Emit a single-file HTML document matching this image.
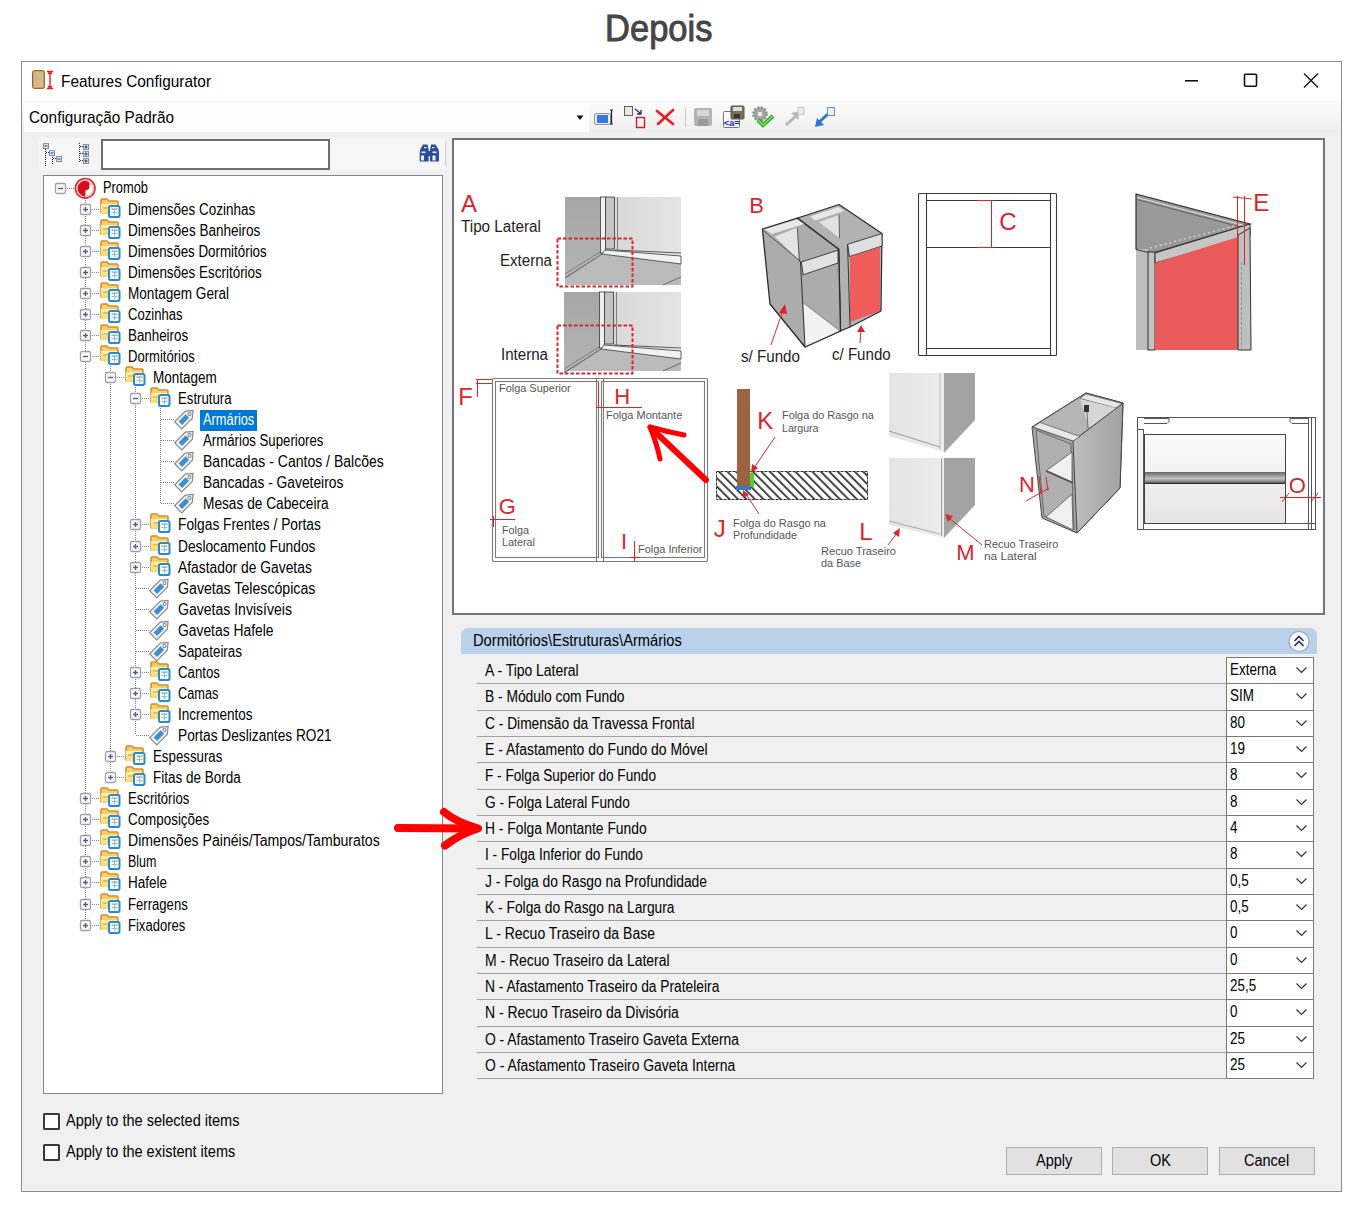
<!DOCTYPE html><html><head><meta charset="utf-8"><style>
html,body{margin:0;padding:0}
body{width:1371px;height:1215px;position:relative;overflow:hidden;background:#fff;font-family:"Liberation Sans",sans-serif}
.t{position:absolute;white-space:pre}
svg{position:absolute;left:0;top:0}
</style></head><body>
<div class="t" style="left:605px;top:11px;font-size:36px;line-height:36px;color:#454545;transform:scaleX(0.9594);transform-origin:0 0;-webkit-text-stroke:0.9px #454545;">Depois</div>
<div style="position:absolute;left:21px;top:61px;width:1319px;height:1129px;border:1px solid #8c8c8c;background:#f0f0f0"></div>
<div style="position:absolute;left:22px;top:62px;width:1319px;height:39px;background:#fff"></div>
<div style="position:absolute;left:22px;top:101px;width:1319px;height:31px;background:linear-gradient(#fcfcfc,#f3f3f3 70%,#ededed)"></div>
<div style="position:absolute;left:22px;top:101px;width:1319px;height:1px;background:#f5f5f5"></div>
<div style="position:absolute;left:24px;top:102px;width:565px;height:30px;background:#fdfdfd"></div>
<div class="t" style="left:61px;top:73px;font-size:17px;line-height:17px;color:#000;transform:scaleX(0.9073);transform-origin:0 0;">Features Configurator</div>
<div class="t" style="left:29px;top:109px;font-size:17px;line-height:17px;color:#000;transform:scaleX(0.9026);transform-origin:0 0;">Configuração Padrão</div>
<svg width="1371" height="1215" style="pointer-events:none"><path d="M1304 73.5 L1318 87.5 M1318 73.5 L1304 87.5" stroke="#111" stroke-width="1.3" fill="none"/><path d="M1185 80.8 h13" stroke="#111" stroke-width="1.6"/><rect x="1244.5" y="74.2" width="12" height="12" rx="1" fill="none" stroke="#111" stroke-width="1.6"/></svg>
<div style="position:absolute;left:39px;top:138px;width:407px;height:32px;background:#f6f6f6;border-radius:4px"></div>
<div style="position:absolute;left:101px;top:139px;width:225px;height:27px;background:#fff;border:2px solid #6d6d6d;box-sizing:content-box"></div>
<div style="position:absolute;left:43px;top:175px;width:398px;height:917px;background:#fff;border:1px solid #828790"></div>
<div class="t" style="left:103px;top:180px;font-size:16px;line-height:16px;color:#000;transform:scaleX(0.8029);transform-origin:0 0;">Promob</div>
<div class="t" style="left:128px;top:202px;font-size:16px;line-height:16px;color:#000;transform:scaleX(0.8408);transform-origin:0 0;">Dimensões Cozinhas</div>
<div class="t" style="left:128px;top:223px;font-size:16px;line-height:16px;color:#000;transform:scaleX(0.8453);transform-origin:0 0;">Dimensões Banheiros</div>
<div class="t" style="left:128px;top:244px;font-size:16px;line-height:16px;color:#000;transform:scaleX(0.8343);transform-origin:0 0;">Dimensões Dormitórios</div>
<div class="t" style="left:128px;top:265px;font-size:16px;line-height:16px;color:#000;transform:scaleX(0.8408);transform-origin:0 0;">Dimensões Escritórios</div>
<div class="t" style="left:128px;top:286px;font-size:16px;line-height:16px;color:#000;transform:scaleX(0.8478);transform-origin:0 0;">Montagem Geral</div>
<div class="t" style="left:128px;top:307px;font-size:16px;line-height:16px;color:#000;transform:scaleX(0.8180);transform-origin:0 0;">Cozinhas</div>
<div class="t" style="left:128px;top:328px;font-size:16px;line-height:16px;color:#000;transform:scaleX(0.8336);transform-origin:0 0;">Banheiros</div>
<div class="t" style="left:128px;top:349px;font-size:16px;line-height:16px;color:#000;transform:scaleX(0.8162);transform-origin:0 0;">Dormitórios</div>
<div class="t" style="left:153px;top:370px;font-size:16px;line-height:16px;color:#000;transform:scaleX(0.8448);transform-origin:0 0;">Montagem</div>
<div class="t" style="left:178px;top:391px;font-size:16px;line-height:16px;color:#000;transform:scaleX(0.8252);transform-origin:0 0;">Estrutura</div>
<div style="position:absolute;left:200px;top:410px;width:57px;height:21px;background:#0078d7"></div>
<div class="t" style="left:203px;top:412px;font-size:16px;line-height:16px;color:#fff;transform:scaleX(0.8012);transform-origin:0 0;">Armários</div>
<div class="t" style="left:203px;top:433px;font-size:16px;line-height:16px;color:#000;transform:scaleX(0.8259);transform-origin:0 0;">Armários Superiores</div>
<div class="t" style="left:203px;top:454px;font-size:16px;line-height:16px;color:#000;transform:scaleX(0.8761);transform-origin:0 0;">Bancadas - Cantos / Balcões</div>
<div class="t" style="left:203px;top:475px;font-size:16px;line-height:16px;color:#000;transform:scaleX(0.8621);transform-origin:0 0;">Bancadas - Gaveteiros</div>
<div class="t" style="left:203px;top:496px;font-size:16px;line-height:16px;color:#000;transform:scaleX(0.8560);transform-origin:0 0;">Mesas de Cabeceira</div>
<div class="t" style="left:178px;top:517px;font-size:16px;line-height:16px;color:#000;transform:scaleX(0.8593);transform-origin:0 0;">Folgas Frentes / Portas</div>
<div class="t" style="left:178px;top:539px;font-size:16px;line-height:16px;color:#000;transform:scaleX(0.8583);transform-origin:0 0;">Deslocamento Fundos</div>
<div class="t" style="left:178px;top:560px;font-size:16px;line-height:16px;color:#000;transform:scaleX(0.8646);transform-origin:0 0;">Afastador de Gavetas</div>
<div class="t" style="left:178px;top:581px;font-size:16px;line-height:16px;color:#000;transform:scaleX(0.8844);transform-origin:0 0;">Gavetas Telescópicas</div>
<div class="t" style="left:178px;top:602px;font-size:16px;line-height:16px;color:#000;transform:scaleX(0.8775);transform-origin:0 0;">Gavetas Invisíveis</div>
<div class="t" style="left:178px;top:623px;font-size:16px;line-height:16px;color:#000;transform:scaleX(0.8661);transform-origin:0 0;">Gavetas Hafele</div>
<div class="t" style="left:178px;top:644px;font-size:16px;line-height:16px;color:#000;transform:scaleX(0.8361);transform-origin:0 0;">Sapateiras</div>
<div class="t" style="left:178px;top:665px;font-size:16px;line-height:16px;color:#000;transform:scaleX(0.8278);transform-origin:0 0;">Cantos</div>
<div class="t" style="left:178px;top:686px;font-size:16px;line-height:16px;color:#000;transform:scaleX(0.7968);transform-origin:0 0;">Camas</div>
<div class="t" style="left:178px;top:707px;font-size:16px;line-height:16px;color:#000;transform:scaleX(0.8480);transform-origin:0 0;">Incrementos</div>
<div class="t" style="left:178px;top:728px;font-size:16px;line-height:16px;color:#000;transform:scaleX(0.8556);transform-origin:0 0;">Portas Deslizantes RO21</div>
<div class="t" style="left:153px;top:749px;font-size:16px;line-height:16px;color:#000;transform:scaleX(0.8299);transform-origin:0 0;">Espessuras</div>
<div class="t" style="left:153px;top:770px;font-size:16px;line-height:16px;color:#000;transform:scaleX(0.8431);transform-origin:0 0;">Fitas de Borda</div>
<div class="t" style="left:128px;top:791px;font-size:16px;line-height:16px;color:#000;transform:scaleX(0.8204);transform-origin:0 0;">Escritórios</div>
<div class="t" style="left:128px;top:812px;font-size:16px;line-height:16px;color:#000;transform:scaleX(0.8372);transform-origin:0 0;">Composições</div>
<div class="t" style="left:128px;top:833px;font-size:16px;line-height:16px;color:#000;transform:scaleX(0.8818);transform-origin:0 0;">Dimensões Painéis/Tampos/Tamburatos</div>
<div class="t" style="left:128px;top:854px;font-size:16px;line-height:16px;color:#000;transform:scaleX(0.7787);transform-origin:0 0;">Blum</div>
<div class="t" style="left:128px;top:875px;font-size:16px;line-height:16px;color:#000;transform:scaleX(0.8424);transform-origin:0 0;">Hafele</div>
<div class="t" style="left:128px;top:897px;font-size:16px;line-height:16px;color:#000;transform:scaleX(0.8195);transform-origin:0 0;">Ferragens</div>
<div class="t" style="left:128px;top:918px;font-size:16px;line-height:16px;color:#000;transform:scaleX(0.8151);transform-origin:0 0;">Fixadores</div>
<svg width="1371" height="1215"><defs><linearGradient id="fg" x1="0" x2="0" y1="0" y2="1"><stop offset="0" stop-color="#fdf0b8"/><stop offset="1" stop-color="#f7d874"/></linearGradient></defs><line x1="85.5" y1="196.0" x2="85.5" y2="925.0" stroke="#808080" stroke-width="1" stroke-dasharray="1 1"/><line x1="110.5" y1="364.0" x2="110.5" y2="777.0" stroke="#808080" stroke-width="1" stroke-dasharray="1 1"/><line x1="135.5" y1="385.0" x2="135.5" y2="735.0" stroke="#808080" stroke-width="1" stroke-dasharray="1 1"/><line x1="160.5" y1="406.0" x2="160.5" y2="503.0" stroke="#808080" stroke-width="1" stroke-dasharray="1 1"/><line x1="61" y1="188.5" x2="75" y2="188.5" stroke="#808080" stroke-width="1" stroke-dasharray="1 1"/><rect x="55.5" y="183.5" width="10" height="10" rx="1.5" fill="#fbfbfb" stroke="#a0a0a0" stroke-width="1.3"/><line x1="58" y1="188.5" x2="63" y2="188.5" stroke="#4a5e99" stroke-width="1.4"/><circle cx="85.2" cy="188.3" r="9.8" fill="#fff" stroke="#dc2a30" stroke-width="1.7"/><circle cx="85.2" cy="188.3" r="7.9" fill="none" stroke="#f2aab0" stroke-width="1"/><path d="M77.8 190.5 Q77 183.5 83 181 Q87 180 89.5 183 Q90 184.5 89.2 186 Q90.3 188 88.7 189.2 Q86.7 190 85.5 190.5 L85.2 196.8 Q80 196 77.8 190.5Z" fill="#d8101c"/><line x1="86" y1="209.5" x2="100" y2="209.5" stroke="#808080" stroke-width="1" stroke-dasharray="1 1"/><rect x="80.5" y="204.5" width="10" height="10" rx="1.5" fill="#fbfbfb" stroke="#a0a0a0" stroke-width="1.3"/><line x1="83" y1="209.5" x2="88" y2="209.5" stroke="#4a5e99" stroke-width="1.4"/><line x1="85.5" y1="207" x2="85.5" y2="212" stroke="#4a5e99" stroke-width="1.4"/><path d="M101 200 q0 -1 1 -1 h5 l2 2 h8 q1 0 1 1 v11 h-17z" fill="#f6cf6a" stroke="#d48f2c" stroke-width="1.5" stroke-linejoin="round"/><path d="M101 204 h16 v10 h-16z" fill="url(#fg)" stroke="none"/><path d="M103 208 h6" stroke="#f0c050" stroke-width="2"/><rect x="109" y="206" width="10.5" height="11" rx="1.8" fill="#fff" stroke="#2a8ad0" stroke-width="2"/><path d="M111.5 209.5 h6 M111.5 212.5 h6 M114.5 208 v7" stroke="#8abce4" stroke-width="1"/><path d="M111.5 208.5 h2 M115.5 208.5 h2" stroke="#f2c040" stroke-width="1.2"/><line x1="86" y1="230.5" x2="100" y2="230.5" stroke="#808080" stroke-width="1" stroke-dasharray="1 1"/><rect x="80.5" y="225.5" width="10" height="10" rx="1.5" fill="#fbfbfb" stroke="#a0a0a0" stroke-width="1.3"/><line x1="83" y1="230.5" x2="88" y2="230.5" stroke="#4a5e99" stroke-width="1.4"/><line x1="85.5" y1="228" x2="85.5" y2="233" stroke="#4a5e99" stroke-width="1.4"/><path d="M101 221 q0 -1 1 -1 h5 l2 2 h8 q1 0 1 1 v11 h-17z" fill="#f6cf6a" stroke="#d48f2c" stroke-width="1.5" stroke-linejoin="round"/><path d="M101 225 h16 v10 h-16z" fill="url(#fg)" stroke="none"/><path d="M103 229 h6" stroke="#f0c050" stroke-width="2"/><rect x="109" y="227" width="10.5" height="11" rx="1.8" fill="#fff" stroke="#2a8ad0" stroke-width="2"/><path d="M111.5 230.5 h6 M111.5 233.5 h6 M114.5 229 v7" stroke="#8abce4" stroke-width="1"/><path d="M111.5 229.5 h2 M115.5 229.5 h2" stroke="#f2c040" stroke-width="1.2"/><line x1="86" y1="251.5" x2="100" y2="251.5" stroke="#808080" stroke-width="1" stroke-dasharray="1 1"/><rect x="80.5" y="246.5" width="10" height="10" rx="1.5" fill="#fbfbfb" stroke="#a0a0a0" stroke-width="1.3"/><line x1="83" y1="251.5" x2="88" y2="251.5" stroke="#4a5e99" stroke-width="1.4"/><line x1="85.5" y1="249" x2="85.5" y2="254" stroke="#4a5e99" stroke-width="1.4"/><path d="M101 242 q0 -1 1 -1 h5 l2 2 h8 q1 0 1 1 v11 h-17z" fill="#f6cf6a" stroke="#d48f2c" stroke-width="1.5" stroke-linejoin="round"/><path d="M101 246 h16 v10 h-16z" fill="url(#fg)" stroke="none"/><path d="M103 250 h6" stroke="#f0c050" stroke-width="2"/><rect x="109" y="248" width="10.5" height="11" rx="1.8" fill="#fff" stroke="#2a8ad0" stroke-width="2"/><path d="M111.5 251.5 h6 M111.5 254.5 h6 M114.5 250 v7" stroke="#8abce4" stroke-width="1"/><path d="M111.5 250.5 h2 M115.5 250.5 h2" stroke="#f2c040" stroke-width="1.2"/><line x1="86" y1="272.5" x2="100" y2="272.5" stroke="#808080" stroke-width="1" stroke-dasharray="1 1"/><rect x="80.5" y="267.5" width="10" height="10" rx="1.5" fill="#fbfbfb" stroke="#a0a0a0" stroke-width="1.3"/><line x1="83" y1="272.5" x2="88" y2="272.5" stroke="#4a5e99" stroke-width="1.4"/><line x1="85.5" y1="270" x2="85.5" y2="275" stroke="#4a5e99" stroke-width="1.4"/><path d="M101 263 q0 -1 1 -1 h5 l2 2 h8 q1 0 1 1 v11 h-17z" fill="#f6cf6a" stroke="#d48f2c" stroke-width="1.5" stroke-linejoin="round"/><path d="M101 267 h16 v10 h-16z" fill="url(#fg)" stroke="none"/><path d="M103 271 h6" stroke="#f0c050" stroke-width="2"/><rect x="109" y="269" width="10.5" height="11" rx="1.8" fill="#fff" stroke="#2a8ad0" stroke-width="2"/><path d="M111.5 272.5 h6 M111.5 275.5 h6 M114.5 271 v7" stroke="#8abce4" stroke-width="1"/><path d="M111.5 271.5 h2 M115.5 271.5 h2" stroke="#f2c040" stroke-width="1.2"/><line x1="86" y1="293.5" x2="100" y2="293.5" stroke="#808080" stroke-width="1" stroke-dasharray="1 1"/><rect x="80.5" y="288.5" width="10" height="10" rx="1.5" fill="#fbfbfb" stroke="#a0a0a0" stroke-width="1.3"/><line x1="83" y1="293.5" x2="88" y2="293.5" stroke="#4a5e99" stroke-width="1.4"/><line x1="85.5" y1="291" x2="85.5" y2="296" stroke="#4a5e99" stroke-width="1.4"/><path d="M101 284 q0 -1 1 -1 h5 l2 2 h8 q1 0 1 1 v11 h-17z" fill="#f6cf6a" stroke="#d48f2c" stroke-width="1.5" stroke-linejoin="round"/><path d="M101 288 h16 v10 h-16z" fill="url(#fg)" stroke="none"/><path d="M103 292 h6" stroke="#f0c050" stroke-width="2"/><rect x="109" y="290" width="10.5" height="11" rx="1.8" fill="#fff" stroke="#2a8ad0" stroke-width="2"/><path d="M111.5 293.5 h6 M111.5 296.5 h6 M114.5 292 v7" stroke="#8abce4" stroke-width="1"/><path d="M111.5 292.5 h2 M115.5 292.5 h2" stroke="#f2c040" stroke-width="1.2"/><line x1="86" y1="314.5" x2="100" y2="314.5" stroke="#808080" stroke-width="1" stroke-dasharray="1 1"/><rect x="80.5" y="309.5" width="10" height="10" rx="1.5" fill="#fbfbfb" stroke="#a0a0a0" stroke-width="1.3"/><line x1="83" y1="314.5" x2="88" y2="314.5" stroke="#4a5e99" stroke-width="1.4"/><line x1="85.5" y1="312" x2="85.5" y2="317" stroke="#4a5e99" stroke-width="1.4"/><path d="M101 305 q0 -1 1 -1 h5 l2 2 h8 q1 0 1 1 v11 h-17z" fill="#f6cf6a" stroke="#d48f2c" stroke-width="1.5" stroke-linejoin="round"/><path d="M101 309 h16 v10 h-16z" fill="url(#fg)" stroke="none"/><path d="M103 313 h6" stroke="#f0c050" stroke-width="2"/><rect x="109" y="311" width="10.5" height="11" rx="1.8" fill="#fff" stroke="#2a8ad0" stroke-width="2"/><path d="M111.5 314.5 h6 M111.5 317.5 h6 M114.5 313 v7" stroke="#8abce4" stroke-width="1"/><path d="M111.5 313.5 h2 M115.5 313.5 h2" stroke="#f2c040" stroke-width="1.2"/><line x1="86" y1="335.5" x2="100" y2="335.5" stroke="#808080" stroke-width="1" stroke-dasharray="1 1"/><rect x="80.5" y="330.5" width="10" height="10" rx="1.5" fill="#fbfbfb" stroke="#a0a0a0" stroke-width="1.3"/><line x1="83" y1="335.5" x2="88" y2="335.5" stroke="#4a5e99" stroke-width="1.4"/><line x1="85.5" y1="333" x2="85.5" y2="338" stroke="#4a5e99" stroke-width="1.4"/><path d="M101 326 q0 -1 1 -1 h5 l2 2 h8 q1 0 1 1 v11 h-17z" fill="#f6cf6a" stroke="#d48f2c" stroke-width="1.5" stroke-linejoin="round"/><path d="M101 330 h16 v10 h-16z" fill="url(#fg)" stroke="none"/><path d="M103 334 h6" stroke="#f0c050" stroke-width="2"/><rect x="109" y="332" width="10.5" height="11" rx="1.8" fill="#fff" stroke="#2a8ad0" stroke-width="2"/><path d="M111.5 335.5 h6 M111.5 338.5 h6 M114.5 334 v7" stroke="#8abce4" stroke-width="1"/><path d="M111.5 334.5 h2 M115.5 334.5 h2" stroke="#f2c040" stroke-width="1.2"/><line x1="86" y1="356.5" x2="100" y2="356.5" stroke="#808080" stroke-width="1" stroke-dasharray="1 1"/><rect x="80.5" y="351.5" width="10" height="10" rx="1.5" fill="#fbfbfb" stroke="#a0a0a0" stroke-width="1.3"/><line x1="83" y1="356.5" x2="88" y2="356.5" stroke="#4a5e99" stroke-width="1.4"/><path d="M101 347 q0 -1 1 -1 h5 l2 2 h8 q1 0 1 1 v11 h-17z" fill="#f6cf6a" stroke="#d48f2c" stroke-width="1.5" stroke-linejoin="round"/><path d="M101 351 h16 v10 h-16z" fill="url(#fg)" stroke="none"/><path d="M103 355 h6" stroke="#f0c050" stroke-width="2"/><rect x="109" y="353" width="10.5" height="11" rx="1.8" fill="#fff" stroke="#2a8ad0" stroke-width="2"/><path d="M111.5 356.5 h6 M111.5 359.5 h6 M114.5 355 v7" stroke="#8abce4" stroke-width="1"/><path d="M111.5 355.5 h2 M115.5 355.5 h2" stroke="#f2c040" stroke-width="1.2"/><line x1="111" y1="377.5" x2="125" y2="377.5" stroke="#808080" stroke-width="1" stroke-dasharray="1 1"/><rect x="105.5" y="372.5" width="10" height="10" rx="1.5" fill="#fbfbfb" stroke="#a0a0a0" stroke-width="1.3"/><line x1="108" y1="377.5" x2="113" y2="377.5" stroke="#4a5e99" stroke-width="1.4"/><path d="M126 368 q0 -1 1 -1 h5 l2 2 h8 q1 0 1 1 v11 h-17z" fill="#f6cf6a" stroke="#d48f2c" stroke-width="1.5" stroke-linejoin="round"/><path d="M126 372 h16 v10 h-16z" fill="url(#fg)" stroke="none"/><path d="M128 376 h6" stroke="#f0c050" stroke-width="2"/><rect x="134" y="374" width="10.5" height="11" rx="1.8" fill="#fff" stroke="#2a8ad0" stroke-width="2"/><path d="M136.5 377.5 h6 M136.5 380.5 h6 M139.5 376 v7" stroke="#8abce4" stroke-width="1"/><path d="M136.5 376.5 h2 M140.5 376.5 h2" stroke="#f2c040" stroke-width="1.2"/><line x1="136" y1="398.5" x2="150" y2="398.5" stroke="#808080" stroke-width="1" stroke-dasharray="1 1"/><rect x="130.5" y="393.5" width="10" height="10" rx="1.5" fill="#fbfbfb" stroke="#a0a0a0" stroke-width="1.3"/><line x1="133" y1="398.5" x2="138" y2="398.5" stroke="#4a5e99" stroke-width="1.4"/><path d="M151 389 q0 -1 1 -1 h5 l2 2 h8 q1 0 1 1 v11 h-17z" fill="#f6cf6a" stroke="#d48f2c" stroke-width="1.5" stroke-linejoin="round"/><path d="M151 393 h16 v10 h-16z" fill="url(#fg)" stroke="none"/><path d="M153 397 h6" stroke="#f0c050" stroke-width="2"/><rect x="159" y="395" width="10.5" height="11" rx="1.8" fill="#fff" stroke="#2a8ad0" stroke-width="2"/><path d="M161.5 398.5 h6 M161.5 401.5 h6 M164.5 397 v7" stroke="#8abce4" stroke-width="1"/><path d="M161.5 397.5 h2 M165.5 397.5 h2" stroke="#f2c040" stroke-width="1.2"/><line x1="161" y1="419.5" x2="175" y2="419.5" stroke="#808080" stroke-width="1" stroke-dasharray="1 1"/><g transform="translate(186,417.5) rotate(-45)"><path d="M-11 -5 h15 l6 5 l-6 5 h-15z" fill="#f4f4f4" stroke="#8a8a8a" stroke-width="1.2"/><rect x="-8" y="-2.5" width="10" height="5" fill="#3c8fd3"/><circle cx="5" cy="0" r="1.5" fill="none" stroke="#8a8a8a"/></g><line x1="161" y1="440.5" x2="175" y2="440.5" stroke="#808080" stroke-width="1" stroke-dasharray="1 1"/><g transform="translate(186,438.5) rotate(-45)"><path d="M-11 -5 h15 l6 5 l-6 5 h-15z" fill="#f4f4f4" stroke="#8a8a8a" stroke-width="1.2"/><rect x="-8" y="-2.5" width="10" height="5" fill="#3c8fd3"/><circle cx="5" cy="0" r="1.5" fill="none" stroke="#8a8a8a"/></g><line x1="161" y1="461.5" x2="175" y2="461.5" stroke="#808080" stroke-width="1" stroke-dasharray="1 1"/><g transform="translate(186,459.5) rotate(-45)"><path d="M-11 -5 h15 l6 5 l-6 5 h-15z" fill="#f4f4f4" stroke="#8a8a8a" stroke-width="1.2"/><rect x="-8" y="-2.5" width="10" height="5" fill="#3c8fd3"/><circle cx="5" cy="0" r="1.5" fill="none" stroke="#8a8a8a"/></g><line x1="161" y1="482.5" x2="175" y2="482.5" stroke="#808080" stroke-width="1" stroke-dasharray="1 1"/><g transform="translate(186,480.5) rotate(-45)"><path d="M-11 -5 h15 l6 5 l-6 5 h-15z" fill="#f4f4f4" stroke="#8a8a8a" stroke-width="1.2"/><rect x="-8" y="-2.5" width="10" height="5" fill="#3c8fd3"/><circle cx="5" cy="0" r="1.5" fill="none" stroke="#8a8a8a"/></g><line x1="161" y1="503.5" x2="175" y2="503.5" stroke="#808080" stroke-width="1" stroke-dasharray="1 1"/><g transform="translate(186,501.5) rotate(-45)"><path d="M-11 -5 h15 l6 5 l-6 5 h-15z" fill="#f4f4f4" stroke="#8a8a8a" stroke-width="1.2"/><rect x="-8" y="-2.5" width="10" height="5" fill="#3c8fd3"/><circle cx="5" cy="0" r="1.5" fill="none" stroke="#8a8a8a"/></g><line x1="136" y1="524.5" x2="150" y2="524.5" stroke="#808080" stroke-width="1" stroke-dasharray="1 1"/><rect x="130.5" y="519.5" width="10" height="10" rx="1.5" fill="#fbfbfb" stroke="#a0a0a0" stroke-width="1.3"/><line x1="133" y1="524.5" x2="138" y2="524.5" stroke="#4a5e99" stroke-width="1.4"/><line x1="135.5" y1="522" x2="135.5" y2="527" stroke="#4a5e99" stroke-width="1.4"/><path d="M151 515 q0 -1 1 -1 h5 l2 2 h8 q1 0 1 1 v11 h-17z" fill="#f6cf6a" stroke="#d48f2c" stroke-width="1.5" stroke-linejoin="round"/><path d="M151 519 h16 v10 h-16z" fill="url(#fg)" stroke="none"/><path d="M153 523 h6" stroke="#f0c050" stroke-width="2"/><rect x="159" y="521" width="10.5" height="11" rx="1.8" fill="#fff" stroke="#2a8ad0" stroke-width="2"/><path d="M161.5 524.5 h6 M161.5 527.5 h6 M164.5 523 v7" stroke="#8abce4" stroke-width="1"/><path d="M161.5 523.5 h2 M165.5 523.5 h2" stroke="#f2c040" stroke-width="1.2"/><line x1="136" y1="546.5" x2="150" y2="546.5" stroke="#808080" stroke-width="1" stroke-dasharray="1 1"/><rect x="130.5" y="541.5" width="10" height="10" rx="1.5" fill="#fbfbfb" stroke="#a0a0a0" stroke-width="1.3"/><line x1="133" y1="546.5" x2="138" y2="546.5" stroke="#4a5e99" stroke-width="1.4"/><line x1="135.5" y1="544" x2="135.5" y2="549" stroke="#4a5e99" stroke-width="1.4"/><path d="M151 537 q0 -1 1 -1 h5 l2 2 h8 q1 0 1 1 v11 h-17z" fill="#f6cf6a" stroke="#d48f2c" stroke-width="1.5" stroke-linejoin="round"/><path d="M151 541 h16 v10 h-16z" fill="url(#fg)" stroke="none"/><path d="M153 545 h6" stroke="#f0c050" stroke-width="2"/><rect x="159" y="543" width="10.5" height="11" rx="1.8" fill="#fff" stroke="#2a8ad0" stroke-width="2"/><path d="M161.5 546.5 h6 M161.5 549.5 h6 M164.5 545 v7" stroke="#8abce4" stroke-width="1"/><path d="M161.5 545.5 h2 M165.5 545.5 h2" stroke="#f2c040" stroke-width="1.2"/><line x1="136" y1="567.5" x2="150" y2="567.5" stroke="#808080" stroke-width="1" stroke-dasharray="1 1"/><rect x="130.5" y="562.5" width="10" height="10" rx="1.5" fill="#fbfbfb" stroke="#a0a0a0" stroke-width="1.3"/><line x1="133" y1="567.5" x2="138" y2="567.5" stroke="#4a5e99" stroke-width="1.4"/><line x1="135.5" y1="565" x2="135.5" y2="570" stroke="#4a5e99" stroke-width="1.4"/><path d="M151 558 q0 -1 1 -1 h5 l2 2 h8 q1 0 1 1 v11 h-17z" fill="#f6cf6a" stroke="#d48f2c" stroke-width="1.5" stroke-linejoin="round"/><path d="M151 562 h16 v10 h-16z" fill="url(#fg)" stroke="none"/><path d="M153 566 h6" stroke="#f0c050" stroke-width="2"/><rect x="159" y="564" width="10.5" height="11" rx="1.8" fill="#fff" stroke="#2a8ad0" stroke-width="2"/><path d="M161.5 567.5 h6 M161.5 570.5 h6 M164.5 566 v7" stroke="#8abce4" stroke-width="1"/><path d="M161.5 566.5 h2 M165.5 566.5 h2" stroke="#f2c040" stroke-width="1.2"/><line x1="136" y1="588.5" x2="150" y2="588.5" stroke="#808080" stroke-width="1" stroke-dasharray="1 1"/><g transform="translate(161,586.5) rotate(-45)"><path d="M-11 -5 h15 l6 5 l-6 5 h-15z" fill="#f4f4f4" stroke="#8a8a8a" stroke-width="1.2"/><rect x="-8" y="-2.5" width="10" height="5" fill="#3c8fd3"/><circle cx="5" cy="0" r="1.5" fill="none" stroke="#8a8a8a"/></g><line x1="136" y1="609.5" x2="150" y2="609.5" stroke="#808080" stroke-width="1" stroke-dasharray="1 1"/><g transform="translate(161,607.5) rotate(-45)"><path d="M-11 -5 h15 l6 5 l-6 5 h-15z" fill="#f4f4f4" stroke="#8a8a8a" stroke-width="1.2"/><rect x="-8" y="-2.5" width="10" height="5" fill="#3c8fd3"/><circle cx="5" cy="0" r="1.5" fill="none" stroke="#8a8a8a"/></g><line x1="136" y1="630.5" x2="150" y2="630.5" stroke="#808080" stroke-width="1" stroke-dasharray="1 1"/><g transform="translate(161,628.5) rotate(-45)"><path d="M-11 -5 h15 l6 5 l-6 5 h-15z" fill="#f4f4f4" stroke="#8a8a8a" stroke-width="1.2"/><rect x="-8" y="-2.5" width="10" height="5" fill="#3c8fd3"/><circle cx="5" cy="0" r="1.5" fill="none" stroke="#8a8a8a"/></g><line x1="136" y1="651.5" x2="150" y2="651.5" stroke="#808080" stroke-width="1" stroke-dasharray="1 1"/><g transform="translate(161,649.5) rotate(-45)"><path d="M-11 -5 h15 l6 5 l-6 5 h-15z" fill="#f4f4f4" stroke="#8a8a8a" stroke-width="1.2"/><rect x="-8" y="-2.5" width="10" height="5" fill="#3c8fd3"/><circle cx="5" cy="0" r="1.5" fill="none" stroke="#8a8a8a"/></g><line x1="136" y1="672.5" x2="150" y2="672.5" stroke="#808080" stroke-width="1" stroke-dasharray="1 1"/><rect x="130.5" y="667.5" width="10" height="10" rx="1.5" fill="#fbfbfb" stroke="#a0a0a0" stroke-width="1.3"/><line x1="133" y1="672.5" x2="138" y2="672.5" stroke="#4a5e99" stroke-width="1.4"/><line x1="135.5" y1="670" x2="135.5" y2="675" stroke="#4a5e99" stroke-width="1.4"/><path d="M151 663 q0 -1 1 -1 h5 l2 2 h8 q1 0 1 1 v11 h-17z" fill="#f6cf6a" stroke="#d48f2c" stroke-width="1.5" stroke-linejoin="round"/><path d="M151 667 h16 v10 h-16z" fill="url(#fg)" stroke="none"/><path d="M153 671 h6" stroke="#f0c050" stroke-width="2"/><rect x="159" y="669" width="10.5" height="11" rx="1.8" fill="#fff" stroke="#2a8ad0" stroke-width="2"/><path d="M161.5 672.5 h6 M161.5 675.5 h6 M164.5 671 v7" stroke="#8abce4" stroke-width="1"/><path d="M161.5 671.5 h2 M165.5 671.5 h2" stroke="#f2c040" stroke-width="1.2"/><line x1="136" y1="693.5" x2="150" y2="693.5" stroke="#808080" stroke-width="1" stroke-dasharray="1 1"/><rect x="130.5" y="688.5" width="10" height="10" rx="1.5" fill="#fbfbfb" stroke="#a0a0a0" stroke-width="1.3"/><line x1="133" y1="693.5" x2="138" y2="693.5" stroke="#4a5e99" stroke-width="1.4"/><line x1="135.5" y1="691" x2="135.5" y2="696" stroke="#4a5e99" stroke-width="1.4"/><path d="M151 684 q0 -1 1 -1 h5 l2 2 h8 q1 0 1 1 v11 h-17z" fill="#f6cf6a" stroke="#d48f2c" stroke-width="1.5" stroke-linejoin="round"/><path d="M151 688 h16 v10 h-16z" fill="url(#fg)" stroke="none"/><path d="M153 692 h6" stroke="#f0c050" stroke-width="2"/><rect x="159" y="690" width="10.5" height="11" rx="1.8" fill="#fff" stroke="#2a8ad0" stroke-width="2"/><path d="M161.5 693.5 h6 M161.5 696.5 h6 M164.5 692 v7" stroke="#8abce4" stroke-width="1"/><path d="M161.5 692.5 h2 M165.5 692.5 h2" stroke="#f2c040" stroke-width="1.2"/><line x1="136" y1="714.5" x2="150" y2="714.5" stroke="#808080" stroke-width="1" stroke-dasharray="1 1"/><rect x="130.5" y="709.5" width="10" height="10" rx="1.5" fill="#fbfbfb" stroke="#a0a0a0" stroke-width="1.3"/><line x1="133" y1="714.5" x2="138" y2="714.5" stroke="#4a5e99" stroke-width="1.4"/><line x1="135.5" y1="712" x2="135.5" y2="717" stroke="#4a5e99" stroke-width="1.4"/><path d="M151 705 q0 -1 1 -1 h5 l2 2 h8 q1 0 1 1 v11 h-17z" fill="#f6cf6a" stroke="#d48f2c" stroke-width="1.5" stroke-linejoin="round"/><path d="M151 709 h16 v10 h-16z" fill="url(#fg)" stroke="none"/><path d="M153 713 h6" stroke="#f0c050" stroke-width="2"/><rect x="159" y="711" width="10.5" height="11" rx="1.8" fill="#fff" stroke="#2a8ad0" stroke-width="2"/><path d="M161.5 714.5 h6 M161.5 717.5 h6 M164.5 713 v7" stroke="#8abce4" stroke-width="1"/><path d="M161.5 713.5 h2 M165.5 713.5 h2" stroke="#f2c040" stroke-width="1.2"/><line x1="136" y1="735.5" x2="150" y2="735.5" stroke="#808080" stroke-width="1" stroke-dasharray="1 1"/><g transform="translate(161,733.5) rotate(-45)"><path d="M-11 -5 h15 l6 5 l-6 5 h-15z" fill="#f4f4f4" stroke="#8a8a8a" stroke-width="1.2"/><rect x="-8" y="-2.5" width="10" height="5" fill="#3c8fd3"/><circle cx="5" cy="0" r="1.5" fill="none" stroke="#8a8a8a"/></g><line x1="111" y1="756.5" x2="125" y2="756.5" stroke="#808080" stroke-width="1" stroke-dasharray="1 1"/><rect x="105.5" y="751.5" width="10" height="10" rx="1.5" fill="#fbfbfb" stroke="#a0a0a0" stroke-width="1.3"/><line x1="108" y1="756.5" x2="113" y2="756.5" stroke="#4a5e99" stroke-width="1.4"/><line x1="110.5" y1="754" x2="110.5" y2="759" stroke="#4a5e99" stroke-width="1.4"/><path d="M126 747 q0 -1 1 -1 h5 l2 2 h8 q1 0 1 1 v11 h-17z" fill="#f6cf6a" stroke="#d48f2c" stroke-width="1.5" stroke-linejoin="round"/><path d="M126 751 h16 v10 h-16z" fill="url(#fg)" stroke="none"/><path d="M128 755 h6" stroke="#f0c050" stroke-width="2"/><rect x="134" y="753" width="10.5" height="11" rx="1.8" fill="#fff" stroke="#2a8ad0" stroke-width="2"/><path d="M136.5 756.5 h6 M136.5 759.5 h6 M139.5 755 v7" stroke="#8abce4" stroke-width="1"/><path d="M136.5 755.5 h2 M140.5 755.5 h2" stroke="#f2c040" stroke-width="1.2"/><line x1="111" y1="777.5" x2="125" y2="777.5" stroke="#808080" stroke-width="1" stroke-dasharray="1 1"/><rect x="105.5" y="772.5" width="10" height="10" rx="1.5" fill="#fbfbfb" stroke="#a0a0a0" stroke-width="1.3"/><line x1="108" y1="777.5" x2="113" y2="777.5" stroke="#4a5e99" stroke-width="1.4"/><line x1="110.5" y1="775" x2="110.5" y2="780" stroke="#4a5e99" stroke-width="1.4"/><path d="M126 768 q0 -1 1 -1 h5 l2 2 h8 q1 0 1 1 v11 h-17z" fill="#f6cf6a" stroke="#d48f2c" stroke-width="1.5" stroke-linejoin="round"/><path d="M126 772 h16 v10 h-16z" fill="url(#fg)" stroke="none"/><path d="M128 776 h6" stroke="#f0c050" stroke-width="2"/><rect x="134" y="774" width="10.5" height="11" rx="1.8" fill="#fff" stroke="#2a8ad0" stroke-width="2"/><path d="M136.5 777.5 h6 M136.5 780.5 h6 M139.5 776 v7" stroke="#8abce4" stroke-width="1"/><path d="M136.5 776.5 h2 M140.5 776.5 h2" stroke="#f2c040" stroke-width="1.2"/><line x1="86" y1="798.5" x2="100" y2="798.5" stroke="#808080" stroke-width="1" stroke-dasharray="1 1"/><rect x="80.5" y="793.5" width="10" height="10" rx="1.5" fill="#fbfbfb" stroke="#a0a0a0" stroke-width="1.3"/><line x1="83" y1="798.5" x2="88" y2="798.5" stroke="#4a5e99" stroke-width="1.4"/><line x1="85.5" y1="796" x2="85.5" y2="801" stroke="#4a5e99" stroke-width="1.4"/><path d="M101 789 q0 -1 1 -1 h5 l2 2 h8 q1 0 1 1 v11 h-17z" fill="#f6cf6a" stroke="#d48f2c" stroke-width="1.5" stroke-linejoin="round"/><path d="M101 793 h16 v10 h-16z" fill="url(#fg)" stroke="none"/><path d="M103 797 h6" stroke="#f0c050" stroke-width="2"/><rect x="109" y="795" width="10.5" height="11" rx="1.8" fill="#fff" stroke="#2a8ad0" stroke-width="2"/><path d="M111.5 798.5 h6 M111.5 801.5 h6 M114.5 797 v7" stroke="#8abce4" stroke-width="1"/><path d="M111.5 797.5 h2 M115.5 797.5 h2" stroke="#f2c040" stroke-width="1.2"/><line x1="86" y1="819.5" x2="100" y2="819.5" stroke="#808080" stroke-width="1" stroke-dasharray="1 1"/><rect x="80.5" y="814.5" width="10" height="10" rx="1.5" fill="#fbfbfb" stroke="#a0a0a0" stroke-width="1.3"/><line x1="83" y1="819.5" x2="88" y2="819.5" stroke="#4a5e99" stroke-width="1.4"/><line x1="85.5" y1="817" x2="85.5" y2="822" stroke="#4a5e99" stroke-width="1.4"/><path d="M101 810 q0 -1 1 -1 h5 l2 2 h8 q1 0 1 1 v11 h-17z" fill="#f6cf6a" stroke="#d48f2c" stroke-width="1.5" stroke-linejoin="round"/><path d="M101 814 h16 v10 h-16z" fill="url(#fg)" stroke="none"/><path d="M103 818 h6" stroke="#f0c050" stroke-width="2"/><rect x="109" y="816" width="10.5" height="11" rx="1.8" fill="#fff" stroke="#2a8ad0" stroke-width="2"/><path d="M111.5 819.5 h6 M111.5 822.5 h6 M114.5 818 v7" stroke="#8abce4" stroke-width="1"/><path d="M111.5 818.5 h2 M115.5 818.5 h2" stroke="#f2c040" stroke-width="1.2"/><line x1="86" y1="840.5" x2="100" y2="840.5" stroke="#808080" stroke-width="1" stroke-dasharray="1 1"/><rect x="80.5" y="835.5" width="10" height="10" rx="1.5" fill="#fbfbfb" stroke="#a0a0a0" stroke-width="1.3"/><line x1="83" y1="840.5" x2="88" y2="840.5" stroke="#4a5e99" stroke-width="1.4"/><line x1="85.5" y1="838" x2="85.5" y2="843" stroke="#4a5e99" stroke-width="1.4"/><path d="M101 831 q0 -1 1 -1 h5 l2 2 h8 q1 0 1 1 v11 h-17z" fill="#f6cf6a" stroke="#d48f2c" stroke-width="1.5" stroke-linejoin="round"/><path d="M101 835 h16 v10 h-16z" fill="url(#fg)" stroke="none"/><path d="M103 839 h6" stroke="#f0c050" stroke-width="2"/><rect x="109" y="837" width="10.5" height="11" rx="1.8" fill="#fff" stroke="#2a8ad0" stroke-width="2"/><path d="M111.5 840.5 h6 M111.5 843.5 h6 M114.5 839 v7" stroke="#8abce4" stroke-width="1"/><path d="M111.5 839.5 h2 M115.5 839.5 h2" stroke="#f2c040" stroke-width="1.2"/><line x1="86" y1="861.5" x2="100" y2="861.5" stroke="#808080" stroke-width="1" stroke-dasharray="1 1"/><rect x="80.5" y="856.5" width="10" height="10" rx="1.5" fill="#fbfbfb" stroke="#a0a0a0" stroke-width="1.3"/><line x1="83" y1="861.5" x2="88" y2="861.5" stroke="#4a5e99" stroke-width="1.4"/><line x1="85.5" y1="859" x2="85.5" y2="864" stroke="#4a5e99" stroke-width="1.4"/><path d="M101 852 q0 -1 1 -1 h5 l2 2 h8 q1 0 1 1 v11 h-17z" fill="#f6cf6a" stroke="#d48f2c" stroke-width="1.5" stroke-linejoin="round"/><path d="M101 856 h16 v10 h-16z" fill="url(#fg)" stroke="none"/><path d="M103 860 h6" stroke="#f0c050" stroke-width="2"/><rect x="109" y="858" width="10.5" height="11" rx="1.8" fill="#fff" stroke="#2a8ad0" stroke-width="2"/><path d="M111.5 861.5 h6 M111.5 864.5 h6 M114.5 860 v7" stroke="#8abce4" stroke-width="1"/><path d="M111.5 860.5 h2 M115.5 860.5 h2" stroke="#f2c040" stroke-width="1.2"/><line x1="86" y1="882.5" x2="100" y2="882.5" stroke="#808080" stroke-width="1" stroke-dasharray="1 1"/><rect x="80.5" y="877.5" width="10" height="10" rx="1.5" fill="#fbfbfb" stroke="#a0a0a0" stroke-width="1.3"/><line x1="83" y1="882.5" x2="88" y2="882.5" stroke="#4a5e99" stroke-width="1.4"/><line x1="85.5" y1="880" x2="85.5" y2="885" stroke="#4a5e99" stroke-width="1.4"/><path d="M101 873 q0 -1 1 -1 h5 l2 2 h8 q1 0 1 1 v11 h-17z" fill="#f6cf6a" stroke="#d48f2c" stroke-width="1.5" stroke-linejoin="round"/><path d="M101 877 h16 v10 h-16z" fill="url(#fg)" stroke="none"/><path d="M103 881 h6" stroke="#f0c050" stroke-width="2"/><rect x="109" y="879" width="10.5" height="11" rx="1.8" fill="#fff" stroke="#2a8ad0" stroke-width="2"/><path d="M111.5 882.5 h6 M111.5 885.5 h6 M114.5 881 v7" stroke="#8abce4" stroke-width="1"/><path d="M111.5 881.5 h2 M115.5 881.5 h2" stroke="#f2c040" stroke-width="1.2"/><line x1="86" y1="904.5" x2="100" y2="904.5" stroke="#808080" stroke-width="1" stroke-dasharray="1 1"/><rect x="80.5" y="899.5" width="10" height="10" rx="1.5" fill="#fbfbfb" stroke="#a0a0a0" stroke-width="1.3"/><line x1="83" y1="904.5" x2="88" y2="904.5" stroke="#4a5e99" stroke-width="1.4"/><line x1="85.5" y1="902" x2="85.5" y2="907" stroke="#4a5e99" stroke-width="1.4"/><path d="M101 895 q0 -1 1 -1 h5 l2 2 h8 q1 0 1 1 v11 h-17z" fill="#f6cf6a" stroke="#d48f2c" stroke-width="1.5" stroke-linejoin="round"/><path d="M101 899 h16 v10 h-16z" fill="url(#fg)" stroke="none"/><path d="M103 903 h6" stroke="#f0c050" stroke-width="2"/><rect x="109" y="901" width="10.5" height="11" rx="1.8" fill="#fff" stroke="#2a8ad0" stroke-width="2"/><path d="M111.5 904.5 h6 M111.5 907.5 h6 M114.5 903 v7" stroke="#8abce4" stroke-width="1"/><path d="M111.5 903.5 h2 M115.5 903.5 h2" stroke="#f2c040" stroke-width="1.2"/><line x1="86" y1="925.5" x2="100" y2="925.5" stroke="#808080" stroke-width="1" stroke-dasharray="1 1"/><rect x="80.5" y="920.5" width="10" height="10" rx="1.5" fill="#fbfbfb" stroke="#a0a0a0" stroke-width="1.3"/><line x1="83" y1="925.5" x2="88" y2="925.5" stroke="#4a5e99" stroke-width="1.4"/><line x1="85.5" y1="923" x2="85.5" y2="928" stroke="#4a5e99" stroke-width="1.4"/><path d="M101 916 q0 -1 1 -1 h5 l2 2 h8 q1 0 1 1 v11 h-17z" fill="#f6cf6a" stroke="#d48f2c" stroke-width="1.5" stroke-linejoin="round"/><path d="M101 920 h16 v10 h-16z" fill="url(#fg)" stroke="none"/><path d="M103 924 h6" stroke="#f0c050" stroke-width="2"/><rect x="109" y="922" width="10.5" height="11" rx="1.8" fill="#fff" stroke="#2a8ad0" stroke-width="2"/><path d="M111.5 925.5 h6 M111.5 928.5 h6 M114.5 924 v7" stroke="#8abce4" stroke-width="1"/><path d="M111.5 924.5 h2 M115.5 924.5 h2" stroke="#f2c040" stroke-width="1.2"/></svg>
<div style="position:absolute;left:43px;top:1113px;width:13px;height:13px;background:#fff;border:2px solid #3a3a3a;border-radius:1.5px"></div>
<div style="position:absolute;left:43px;top:1144px;width:13px;height:13px;background:#fff;border:2px solid #3a3a3a;border-radius:1.5px"></div>
<div class="t" style="left:65.5px;top:1113px;font-size:16px;line-height:16px;color:#000;transform:scaleX(0.9071);transform-origin:0 0;">Apply to the selected items</div>
<div class="t" style="left:65.5px;top:1144px;font-size:16px;line-height:16px;color:#000;transform:scaleX(0.9063);transform-origin:0 0;">Apply to the existent items</div>
<div style="position:absolute;left:452px;top:138px;width:869px;height:473px;background:#fff;border:2px solid #747474;box-sizing:content-box"></div>
<div style="position:absolute;left:461px;top:628px;width:856px;height:26px;background:#b9d1ea;border-radius:7px 7px 0 0"></div>
<div class="t" style="left:473px;top:633px;font-size:16px;line-height:16px;color:#000;transform:scaleX(0.9177);transform-origin:0 0;">Dormitórios\Estruturas\Armários</div>
<svg width="1371" height="1215"><circle cx="1299" cy="641.5" r="10" fill="#fbfbfb" stroke="#9aa6b8" stroke-width="1.2"/><path d="M1294.5 641 l4.5 -4.5 l4.5 4.5 M1294.5 646 l4.5 -4.5 l4.5 4.5" stroke="#1e2f6a" stroke-width="1.6" fill="none"/></svg>
<div style="position:absolute;left:477px;top:683px;width:750px;height:1px;background:#a0a0a0"></div>
<div class="t" style="left:485px;top:663px;font-size:16px;line-height:16px;color:#000;transform:scaleX(0.8707);transform-origin:0 0;">A - Tipo Lateral</div>
<div style="position:absolute;left:1226px;top:657px;width:86px;height:25px;background:#fff;border:1px solid #7a7a7a;box-sizing:content-box"></div>
<div class="t" style="left:1230px;top:662px;font-size:16px;line-height:16px;color:#000;transform:scaleX(0.8400);transform-origin:0 0;">Externa</div>
<div style="position:absolute;left:477px;top:710px;width:750px;height:1px;background:#a0a0a0"></div>
<div class="t" style="left:485px;top:689px;font-size:16px;line-height:16px;color:#000;transform:scaleX(0.8619);transform-origin:0 0;">B - Módulo com Fundo</div>
<div style="position:absolute;left:1226px;top:683px;width:86px;height:26px;background:#fff;border:1px solid #7a7a7a;box-sizing:content-box"></div>
<div class="t" style="left:1230px;top:688px;font-size:16px;line-height:16px;color:#000;transform:scaleX(0.8400);transform-origin:0 0;">SIM</div>
<div style="position:absolute;left:477px;top:736px;width:750px;height:1px;background:#a0a0a0"></div>
<div class="t" style="left:485px;top:716px;font-size:16px;line-height:16px;color:#000;transform:scaleX(0.8596);transform-origin:0 0;">C - Dimensão da Travessa Frontal</div>
<div style="position:absolute;left:1226px;top:710px;width:86px;height:25px;background:#fff;border:1px solid #7a7a7a;box-sizing:content-box"></div>
<div class="t" style="left:1230px;top:715px;font-size:16px;line-height:16px;color:#000;transform:scaleX(0.8400);transform-origin:0 0;">80</div>
<div style="position:absolute;left:477px;top:762px;width:750px;height:1px;background:#a0a0a0"></div>
<div class="t" style="left:485px;top:742px;font-size:16px;line-height:16px;color:#000;transform:scaleX(0.8725);transform-origin:0 0;">E - Afastamento do Fundo do Móvel</div>
<div style="position:absolute;left:1226px;top:736px;width:86px;height:25px;background:#fff;border:1px solid #7a7a7a;box-sizing:content-box"></div>
<div class="t" style="left:1230px;top:741px;font-size:16px;line-height:16px;color:#000;transform:scaleX(0.8400);transform-origin:0 0;">19</div>
<div style="position:absolute;left:477px;top:789px;width:750px;height:1px;background:#a0a0a0"></div>
<div class="t" style="left:485px;top:768px;font-size:16px;line-height:16px;color:#000;transform:scaleX(0.8505);transform-origin:0 0;">F - Folga Superior do Fundo</div>
<div style="position:absolute;left:1226px;top:762px;width:86px;height:26px;background:#fff;border:1px solid #7a7a7a;box-sizing:content-box"></div>
<div class="t" style="left:1230px;top:767px;font-size:16px;line-height:16px;color:#000;transform:scaleX(0.8400);transform-origin:0 0;">8</div>
<div style="position:absolute;left:477px;top:815px;width:750px;height:1px;background:#a0a0a0"></div>
<div class="t" style="left:485px;top:795px;font-size:16px;line-height:16px;color:#000;transform:scaleX(0.8522);transform-origin:0 0;">G - Folga Lateral Fundo</div>
<div style="position:absolute;left:1226px;top:789px;width:86px;height:25px;background:#fff;border:1px solid #7a7a7a;box-sizing:content-box"></div>
<div class="t" style="left:1230px;top:794px;font-size:16px;line-height:16px;color:#000;transform:scaleX(0.8400);transform-origin:0 0;">8</div>
<div style="position:absolute;left:477px;top:841px;width:750px;height:1px;background:#a0a0a0"></div>
<div class="t" style="left:485px;top:821px;font-size:16px;line-height:16px;color:#000;transform:scaleX(0.8655);transform-origin:0 0;">H - Folga Montante Fundo</div>
<div style="position:absolute;left:1226px;top:815px;width:86px;height:25px;background:#fff;border:1px solid #7a7a7a;box-sizing:content-box"></div>
<div class="t" style="left:1230px;top:820px;font-size:16px;line-height:16px;color:#000;transform:scaleX(0.8400);transform-origin:0 0;">4</div>
<div style="position:absolute;left:477px;top:868px;width:750px;height:1px;background:#a0a0a0"></div>
<div class="t" style="left:485px;top:847px;font-size:16px;line-height:16px;color:#000;transform:scaleX(0.8538);transform-origin:0 0;">I - Folga Inferior do Fundo</div>
<div style="position:absolute;left:1226px;top:841px;width:86px;height:26px;background:#fff;border:1px solid #7a7a7a;box-sizing:content-box"></div>
<div class="t" style="left:1230px;top:846px;font-size:16px;line-height:16px;color:#000;transform:scaleX(0.8400);transform-origin:0 0;">8</div>
<div style="position:absolute;left:477px;top:894px;width:750px;height:1px;background:#a0a0a0"></div>
<div class="t" style="left:485px;top:874px;font-size:16px;line-height:16px;color:#000;transform:scaleX(0.8636);transform-origin:0 0;">J - Folga do Rasgo na Profundidade</div>
<div style="position:absolute;left:1226px;top:868px;width:86px;height:25px;background:#fff;border:1px solid #7a7a7a;box-sizing:content-box"></div>
<div class="t" style="left:1230px;top:873px;font-size:16px;line-height:16px;color:#000;transform:scaleX(0.8400);transform-origin:0 0;">0,5</div>
<div style="position:absolute;left:477px;top:920px;width:750px;height:1px;background:#a0a0a0"></div>
<div class="t" style="left:485px;top:900px;font-size:16px;line-height:16px;color:#000;transform:scaleX(0.8628);transform-origin:0 0;">K - Folga do Rasgo na Largura</div>
<div style="position:absolute;left:1226px;top:894px;width:86px;height:25px;background:#fff;border:1px solid #7a7a7a;box-sizing:content-box"></div>
<div class="t" style="left:1230px;top:899px;font-size:16px;line-height:16px;color:#000;transform:scaleX(0.8400);transform-origin:0 0;">0,5</div>
<div style="position:absolute;left:477px;top:947px;width:750px;height:1px;background:#a0a0a0"></div>
<div class="t" style="left:485px;top:926px;font-size:16px;line-height:16px;color:#000;transform:scaleX(0.8753);transform-origin:0 0;">L - Recuo Traseiro da Base</div>
<div style="position:absolute;left:1226px;top:920px;width:86px;height:26px;background:#fff;border:1px solid #7a7a7a;box-sizing:content-box"></div>
<div class="t" style="left:1230px;top:925px;font-size:16px;line-height:16px;color:#000;transform:scaleX(0.8400);transform-origin:0 0;">0</div>
<div style="position:absolute;left:477px;top:973px;width:750px;height:1px;background:#a0a0a0"></div>
<div class="t" style="left:485px;top:953px;font-size:16px;line-height:16px;color:#000;transform:scaleX(0.8719);transform-origin:0 0;">M - Recuo Traseiro da Lateral</div>
<div style="position:absolute;left:1226px;top:947px;width:86px;height:25px;background:#fff;border:1px solid #7a7a7a;box-sizing:content-box"></div>
<div class="t" style="left:1230px;top:952px;font-size:16px;line-height:16px;color:#000;transform:scaleX(0.8400);transform-origin:0 0;">0</div>
<div style="position:absolute;left:477px;top:999px;width:750px;height:1px;background:#a0a0a0"></div>
<div class="t" style="left:485px;top:979px;font-size:16px;line-height:16px;color:#000;transform:scaleX(0.8610);transform-origin:0 0;">N - Afastamento Traseiro da Prateleira</div>
<div style="position:absolute;left:1226px;top:973px;width:86px;height:25px;background:#fff;border:1px solid #7a7a7a;box-sizing:content-box"></div>
<div class="t" style="left:1230px;top:978px;font-size:16px;line-height:16px;color:#000;transform:scaleX(0.8400);transform-origin:0 0;">25,5</div>
<div style="position:absolute;left:477px;top:1026px;width:750px;height:1px;background:#a0a0a0"></div>
<div class="t" style="left:485px;top:1005px;font-size:16px;line-height:16px;color:#000;transform:scaleX(0.8720);transform-origin:0 0;">N - Recuo Traseiro da Divisória</div>
<div style="position:absolute;left:1226px;top:999px;width:86px;height:26px;background:#fff;border:1px solid #7a7a7a;box-sizing:content-box"></div>
<div class="t" style="left:1230px;top:1004px;font-size:16px;line-height:16px;color:#000;transform:scaleX(0.8400);transform-origin:0 0;">0</div>
<div style="position:absolute;left:477px;top:1052px;width:750px;height:1px;background:#a0a0a0"></div>
<div class="t" style="left:485px;top:1032px;font-size:16px;line-height:16px;color:#000;transform:scaleX(0.8652);transform-origin:0 0;">O - Afastamento Traseiro Gaveta Externa</div>
<div style="position:absolute;left:1226px;top:1026px;width:86px;height:25px;background:#fff;border:1px solid #7a7a7a;box-sizing:content-box"></div>
<div class="t" style="left:1230px;top:1031px;font-size:16px;line-height:16px;color:#000;transform:scaleX(0.8400);transform-origin:0 0;">25</div>
<div style="position:absolute;left:477px;top:1078px;width:750px;height:1px;background:#a0a0a0"></div>
<div class="t" style="left:485px;top:1058px;font-size:16px;line-height:16px;color:#000;transform:scaleX(0.8683);transform-origin:0 0;">O - Afastamento Traseiro Gaveta Interna</div>
<div style="position:absolute;left:1226px;top:1052px;width:86px;height:25px;background:#fff;border:1px solid #7a7a7a;box-sizing:content-box"></div>
<div class="t" style="left:1230px;top:1057px;font-size:16px;line-height:16px;color:#000;transform:scaleX(0.8400);transform-origin:0 0;">25</div>
<svg width="1371" height="1215"><path d="M1296.5 667.5 l5 5 l5 -5" stroke="#333" stroke-width="1.2" fill="none"/><path d="M1296.5 693.5 l5 5 l5 -5" stroke="#333" stroke-width="1.2" fill="none"/><path d="M1296.5 720.5 l5 5 l5 -5" stroke="#333" stroke-width="1.2" fill="none"/><path d="M1296.5 746.5 l5 5 l5 -5" stroke="#333" stroke-width="1.2" fill="none"/><path d="M1296.5 772.5 l5 5 l5 -5" stroke="#333" stroke-width="1.2" fill="none"/><path d="M1296.5 799.5 l5 5 l5 -5" stroke="#333" stroke-width="1.2" fill="none"/><path d="M1296.5 825.5 l5 5 l5 -5" stroke="#333" stroke-width="1.2" fill="none"/><path d="M1296.5 851.5 l5 5 l5 -5" stroke="#333" stroke-width="1.2" fill="none"/><path d="M1296.5 878.5 l5 5 l5 -5" stroke="#333" stroke-width="1.2" fill="none"/><path d="M1296.5 904.5 l5 5 l5 -5" stroke="#333" stroke-width="1.2" fill="none"/><path d="M1296.5 930.5 l5 5 l5 -5" stroke="#333" stroke-width="1.2" fill="none"/><path d="M1296.5 957.5 l5 5 l5 -5" stroke="#333" stroke-width="1.2" fill="none"/><path d="M1296.5 983.5 l5 5 l5 -5" stroke="#333" stroke-width="1.2" fill="none"/><path d="M1296.5 1009.5 l5 5 l5 -5" stroke="#333" stroke-width="1.2" fill="none"/><path d="M1296.5 1036.5 l5 5 l5 -5" stroke="#333" stroke-width="1.2" fill="none"/><path d="M1296.5 1062.5 l5 5 l5 -5" stroke="#333" stroke-width="1.2" fill="none"/></svg>
<div style="position:absolute;left:1006px;top:1147px;width:94px;height:26px;background:#e1e1e1;border:1px solid #adadad;box-sizing:content-box"></div>
<div class="t" style="left:1035.9px;top:1153px;font-size:16px;line-height:16px;color:#000;transform:scaleX(0.9039);transform-origin:0 0;">Apply</div>
<div style="position:absolute;left:1112px;top:1147px;width:94px;height:26px;background:#e1e1e1;border:1px solid #adadad;box-sizing:content-box"></div>
<div class="t" style="left:1149.5px;top:1153px;font-size:16px;line-height:16px;color:#000;transform:scaleX(0.9081);transform-origin:0 0;">OK</div>
<div style="position:absolute;left:1219px;top:1147px;width:94px;height:26px;background:#e1e1e1;border:1px solid #adadad;box-sizing:content-box"></div>
<div class="t" style="left:1244.4px;top:1153px;font-size:16px;line-height:16px;color:#000;transform:scaleX(0.9068);transform-origin:0 0;">Cancel</div>
<svg width="1371" height="1215"><defs><linearGradient id="gA" x1="0" x2="1" y1="0" y2="0"><stop offset="0" stop-color="#cfcfcf"/><stop offset="1" stop-color="#e4e4e4"/></linearGradient><linearGradient id="gL" x1="0" x2="0" y1="0" y2="1"><stop offset="0" stop-color="#a6a6a6"/><stop offset="1" stop-color="#b4b4b4"/></linearGradient><pattern id="hatch" width="6" height="6" patternUnits="userSpaceOnUse" patternTransform="rotate(-45)"><rect x="0" y="0" width="1.7" height="6" fill="#2a2a2a"/></pattern><linearGradient id="gBand" x1="0" x2="0" y1="0" y2="1"><stop offset="0" stop-color="#666"/><stop offset="0.55" stop-color="#c4c4c4"/><stop offset="0.85" stop-color="#777"/><stop offset="1" stop-color="#111"/></linearGradient><linearGradient id="gSide" x1="0" x2="1" y1="0" y2="0"><stop offset="0" stop-color="#bdbdbd"/><stop offset="1" stop-color="#a2a2a2"/></linearGradient></defs><rect x="565" y="197" width="116" height="88" fill="url(#gA)"/><polygon points="565,197 600,197 602,253 565,278" fill="url(#gL)"/><polygon points="565,278 602,254 681,264 681,285 565,285" fill="#bababa"/><rect x="600.5" y="197" width="5" height="56" fill="#f0f0f0" stroke="#3a3a3a" stroke-width="0.8"/><rect x="605.5" y="197" width="9" height="52" fill="#c4c4c4" stroke="#3a3a3a" stroke-width="0.8"/><line x1="617.5" y1="197" x2="617.5" y2="250" stroke="#555" stroke-width="0.7"/><polygon points="602,254 605,250 681,256 681,264" fill="#f2f2f2" stroke="#3a3a3a" stroke-width="0.8"/><line x1="615" y1="250" x2="681" y2="253" stroke="#3a3a3a" stroke-width="0.8"/><line x1="565" y1="278" x2="602" y2="254" stroke="#3a3a3a" stroke-width="0.8"/><line x1="565" y1="274" x2="600" y2="252" stroke="#6a6a6a" stroke-width="0.7"/><line x1="663" y1="285" x2="681" y2="277" stroke="#555" stroke-width="0.8"/><rect x="564" y="292" width="117" height="79" fill="url(#gA)"/><polygon points="564,292 599,292 601,348 564,373" fill="url(#gL)"/><polygon points="564,373 601,349 681,359 681,371 564,371" fill="#bababa"/><rect x="599.5" y="292" width="5" height="56" fill="#f0f0f0" stroke="#3a3a3a" stroke-width="0.8"/><rect x="604.5" y="292" width="9" height="52" fill="#c4c4c4" stroke="#3a3a3a" stroke-width="0.8"/><line x1="616.5" y1="292" x2="616.5" y2="345" stroke="#555" stroke-width="0.7"/><polygon points="601,349 604,345 681,351 681,359" fill="#f2f2f2" stroke="#3a3a3a" stroke-width="0.8"/><line x1="614" y1="345" x2="681" y2="348" stroke="#3a3a3a" stroke-width="0.8"/><line x1="564" y1="373" x2="601" y2="349" stroke="#3a3a3a" stroke-width="0.8"/><line x1="564" y1="369" x2="599" y2="347" stroke="#6a6a6a" stroke-width="0.7"/><line x1="663" y1="371" x2="681" y2="363" stroke="#555" stroke-width="0.8"/><rect x="557.5" y="238.5" width="75" height="48" fill="none" stroke="#d9262b" stroke-width="2" stroke-dasharray="3.5 2"/><rect x="557.5" y="325.5" width="75" height="48" fill="none" stroke="#d9262b" stroke-width="2" stroke-dasharray="3.5 2"/><polygon points="807,215 839,204.5 882,233.5 881,311 850,327 840.5,331 838.7,249.2 797.5,218" fill="#b2b2b2" stroke="#2a2a2a" stroke-width="1.2" stroke-linejoin="round"/><polygon points="810,216.5 838.5,207 844,211 815,220.5" fill="#e8e8e8"/><polygon points="819,222 839,215 839.5,238" fill="#e2e2e2"/><line x1="839" y1="214.5" x2="839.5" y2="238" stroke="#444" stroke-width="0.8"/><polygon points="847.6,244.3 882,233.5 882,246 849.5,256.6" fill="#e0e0e0" stroke="#333" stroke-width="0.9"/><polygon points="850,257 880,247 880,311 850,322" fill="#ee5c5c"/><line x1="847.6" y1="244.3" x2="850" y2="327" stroke="#333" stroke-width="1"/><polygon points="762.4,229 797.3,218.2 838.7,249.2 840.5,331 805,347 770,304" fill="#acacac" stroke="#2a2a2a" stroke-width="1.3" stroke-linejoin="round"/><polygon points="764.8,229.5 797.3,219.2 804.2,224.1 771.7,234" fill="#e8e8e8"/><polygon points="774.7,236.4 797.3,227.6 798.8,260" fill="#e4e4e4"/><line x1="797.3" y1="227.6" x2="799.5" y2="262" stroke="#444" stroke-width="0.8"/><line x1="764" y1="231" x2="801.3" y2="262" stroke="#444" stroke-width="0.9"/><polygon points="801.3,262 838,250.2 838,263 803.2,274.8" fill="#e2e2e2" stroke="#333" stroke-width="0.9"/><polygon points="803.5,303 840,331 805,347" fill="#f2f2f2"/><line x1="800.5" y1="262" x2="805" y2="347" stroke="#333" stroke-width="1"/><line x1="805" y1="347" x2="840.5" y2="331" stroke="#333" stroke-width="1.1"/><line x1="803.5" y1="303" x2="840" y2="331" stroke="#555" stroke-width="0.6"/><line x1="771" y1="345" x2="783" y2="310" stroke="#d9262b" stroke-width="1"/><polygon points="785,304 779,313 787,314" fill="#d9262b"/><line x1="860" y1="343" x2="861" y2="330" stroke="#d9262b" stroke-width="1"/><polygon points="861,325 857,332 865,332" fill="#d9262b"/><g fill="none" stroke="#3a3a3a" stroke-width="1.1"><rect x="918.5" y="193.5" width="138" height="162" rx="1"/><line x1="926.5" y1="194" x2="926.5" y2="356"/><line x1="1050.5" y1="194" x2="1050.5" y2="356"/><line x1="926" y1="200.5" x2="1051" y2="200.5"/><line x1="926" y1="247.5" x2="1051" y2="247.5"/><line x1="926" y1="348.5" x2="1051" y2="348.5"/></g><g stroke="#d9262b" stroke-width="1"><line x1="991.5" y1="200" x2="991.5" y2="248"/><line x1="977" y1="200.5" x2="993" y2="200.5"/><line x1="977" y1="247.5" x2="993" y2="247.5"/></g><polygon points="1136,194 1250,224 1153,253 1136,249" fill="#999999" stroke="#2e2e2e" stroke-width="1.2"/><line x1="1137" y1="197.5" x2="1246" y2="226" stroke="#dcdcdc" stroke-width="1.2"/><line x1="1137" y1="199.5" x2="1244" y2="228" stroke="#555" stroke-width="0.8"/><line x1="1150" y1="248" x2="1242" y2="224" stroke="#d6d6d6" stroke-width="1.4" stroke-dasharray="2 3"/><rect x="1136" y="249" width="12" height="101" fill="#bdbdbd"/><line x1="1136" y1="249.5" x2="1153" y2="253.5" stroke="#333" stroke-width="1"/><rect x="1148" y="252" width="7" height="98" fill="#c4c4c4" stroke="#333" stroke-width="1"/><polygon points="1155,253 1250,224 1250,236 1155,263" fill="#c6c6c6" stroke="#333" stroke-width="1"/><polygon points="1155,263 1238,237 1238,350 1155,350" fill="#ec5b5b"/><polygon points="1238,235 1250,228 1251,350 1238,350" fill="#bfbfbf" stroke="#333" stroke-width="1"/><line x1="1241.5" y1="262" x2="1241.5" y2="348" stroke="#888" stroke-width="0.9" stroke-dasharray="3 2"/><g stroke="#d9262b" stroke-width="1"><line x1="1237.5" y1="196" x2="1237.5" y2="263"/><line x1="1244.5" y1="196" x2="1244.5" y2="265"/><line x1="1233" y1="197" x2="1252" y2="199"/></g><g fill="none" stroke="#7a7a7a" stroke-width="1.1"><rect x="492.5" y="378.5" width="215" height="183" rx="1"/><rect x="495.5" y="381.5" width="103" height="176"/><rect x="601.5" y="381.5" width="103" height="176"/><line x1="596.5" y1="379" x2="596.5" y2="561"/><line x1="603.5" y1="379" x2="603.5" y2="561"/></g><g stroke="#d9262b" stroke-width="1" fill="none"><line x1="476" y1="379.5" x2="492" y2="379.5"/><line x1="476" y1="383.5" x2="492" y2="383.5"/><line x1="477.5" y1="379" x2="477.5" y2="397"/><line x1="596" y1="407.5" x2="642" y2="407.5"/><line x1="598.5" y1="383" x2="598.5" y2="408"/><line x1="490" y1="519.5" x2="515" y2="519.5"/><line x1="493.5" y1="516" x2="493.5" y2="527"/><line x1="634.5" y1="541" x2="634.5" y2="562"/><line x1="630" y1="557.5" x2="640" y2="557.5"/></g><g stroke="#ff0000" stroke-width="6" stroke-linecap="round" fill="none"><line x1="706" y1="480" x2="652" y2="429"/><path d="M650 427 Q668 432 684 435" stroke-width="5"/><path d="M650 427 Q657 444 660 459" stroke-width="5"/></g><rect x="716.5" y="471.5" width="151" height="28" fill="url(#hatch)" stroke="#333" stroke-width="1" stroke-dasharray="3 1"/><rect x="737" y="389" width="13" height="97" fill="#9b6340"/><rect x="750" y="473" width="4" height="14" fill="#4bd52a"/><rect x="736" y="486" width="15" height="4" fill="#3a78c2"/><line x1="775" y1="437" x2="754" y2="468" stroke="#d9262b" stroke-width="1"/><polygon points="751,473 752,464 758,468" fill="#d9262b"/><line x1="759" y1="514" x2="746" y2="494" stroke="#d9262b" stroke-width="1"/><polygon points="743,490 743,498 749,495" fill="#d9262b"/><defs><linearGradient id="gDoor" x1="0" x2="1"><stop offset="0" stop-color="#e4e4e4"/><stop offset="1" stop-color="#ececec"/></linearGradient></defs><polygon points="889,373 944,373 944,452 889,436" fill="url(#gDoor)"/><polygon points="944,373 975,373 975,420 944,453" fill="#a3a3a3"/><line x1="940" y1="373" x2="940" y2="450" stroke="#bbb" stroke-width="1"/><line x1="889" y1="431" x2="940" y2="447" stroke="#999" stroke-width="1"/><polygon points="889,458 944,458 944,538 889,525" fill="url(#gDoor)"/><polygon points="944,458 975,458 975,505 944,538" fill="#a3a3a3"/><line x1="941.5" y1="458" x2="941.5" y2="536" stroke="#999" stroke-width="1"/><line x1="889" y1="521" x2="940" y2="534" stroke="#aaa" stroke-width="1"/><line x1="888" y1="545" x2="897" y2="533" stroke="#d9262b" stroke-width="1"/><polygon points="900,528 893,533 899,537" fill="#d9262b"/><line x1="982" y1="545" x2="949" y2="518" stroke="#d9262b" stroke-width="1"/><polygon points="945,514 948,522 953,516" fill="#d9262b"/><polygon points="1032,427 1086,393 1123,403 1120,488 1077,533 1042,518" fill="#a9a9a9" stroke="#444" stroke-width="1"/><polygon points="1073,441 1123,403 1120,488 1077,533" fill="url(#gSide)" stroke="#444" stroke-width="1"/><polygon points="1032,427 1086,393 1123,403 1073,441" fill="#b5b5b5" stroke="#444" stroke-width="1"/><polygon points="1033,427 1073,441 1080,436.5 1040,422.5" fill="#e8e8e8" stroke="#555" stroke-width="0.7"/><polygon points="1086,394 1122,403.5 1116,408 1080,398.5" fill="#e8e8e8" stroke="#555" stroke-width="0.7"/><polygon points="1080,399 1116,408 1089,428" fill="#d6d6d6"/><polygon points="1036,430 1071,444 1074,530 1044,516" fill="#b0b0b0" stroke="#555" stroke-width="0.8"/><polygon points="1046,471 1072,452 1072,482 1050,472" fill="#f0f0f0" stroke="#555" stroke-width="0.8"/><polygon points="1046,517 1072,494 1073,530" fill="#f0f0f0" stroke="#555" stroke-width="0.8"/><line x1="1046" y1="471" x2="1073" y2="483" stroke="#555" stroke-width="1.5"/><rect x="1084" y="405" width="5" height="7" fill="#333"/><line x1="1087" y1="412" x2="1088" y2="428" stroke="#555" stroke-width="0.8"/><g stroke="#d9262b" stroke-width="1"><line x1="1026" y1="501" x2="1049" y2="488"/><line x1="1039" y1="476" x2="1041" y2="494"/><line x1="1046" y1="477" x2="1048" y2="491"/></g><g stroke="#555" stroke-width="1" fill="#fff"><rect x="1137.5" y="417.5" width="178" height="112"/><rect x="1137.5" y="429.5" width="6" height="100" fill="#f4f4f4"/><line x1="1308.5" y1="418" x2="1308.5" y2="529"/><line x1="1311.5" y1="418" x2="1311.5" y2="529"/><line x1="1144" y1="523.5" x2="1316" y2="523.5"/></g><defs><linearGradient id="gDr" x1="0" x2="0" y1="0" y2="1"><stop offset="0" stop-color="#fbfbfb"/><stop offset="1" stop-color="#e6e4e4"/></linearGradient></defs><path d="M1144 418.5 h25 v3 l-2 2 h-23 M1308 418.5 h-18 v3 l2 2 h16" fill="#fff" stroke="#555" stroke-width="1"/><rect x="1144.5" y="434.5" width="141" height="89" fill="url(#gDr)" stroke="#444" stroke-width="1"/><rect x="1145" y="472" width="140" height="12" fill="url(#gBand)"/><g stroke="#d9262b" stroke-width="1"><line x1="1280" y1="497.5" x2="1321" y2="497.5"/><line x1="1282" y1="502" x2="1289" y2="493"/><line x1="1311" y1="502" x2="1318" y2="493"/></g></svg>
<div class="t" style="left:461px;top:192px;font-size:24px;line-height:24px;color:#d9262b;">A</div>
<div class="t" style="left:461px;top:219px;font-size:16px;line-height:16px;color:#222;transform:scaleX(0.9526);transform-origin:0 0;">Tipo Lateral</div>
<div class="t" style="left:500px;top:253px;font-size:16px;line-height:16px;color:#222;transform:scaleX(0.9425);transform-origin:0 0;">Externa</div>
<div class="t" style="left:501px;top:347px;font-size:16px;line-height:16px;color:#222;transform:scaleX(0.9427);transform-origin:0 0;">Interna</div>
<div class="t" style="left:749.3px;top:195px;font-size:22px;line-height:22px;color:#d9262b;">B</div>
<div class="t" style="left:741px;top:349px;font-size:16px;line-height:16px;color:#222;transform:scaleX(0.9468);transform-origin:0 0;">s/ Fundo</div>
<div class="t" style="left:832px;top:347px;font-size:16px;line-height:16px;color:#222;transform:scaleX(0.9420);transform-origin:0 0;">c/ Fundo</div>
<div class="t" style="left:999.3px;top:210px;font-size:24px;line-height:24px;color:#d9262b;">C</div>
<div class="t" style="left:1253.3px;top:191px;font-size:24px;line-height:24px;color:#d9262b;">E</div>
<div class="t" style="left:458.3px;top:385px;font-size:24px;line-height:24px;color:#d9262b;">F</div>
<div class="t" style="left:498.6px;top:383px;font-size:11px;line-height:11px;color:#555;transform:scaleX(0.9932);transform-origin:0 0;">Folga Superior</div>
<div class="t" style="left:614.3px;top:386px;font-size:22px;line-height:22px;color:#d9262b;">H</div>
<div class="t" style="left:606.3px;top:410px;font-size:11px;line-height:11px;color:#555;transform:scaleX(0.9974);transform-origin:0 0;">Folga Montante</div>
<div class="t" style="left:498.8px;top:496px;font-size:22px;line-height:22px;color:#d9262b;">G</div>
<div class="t" style="left:502px;top:524.5px;font-size:11px;line-height:11px;color:#555;transform:scaleX(0.9807);transform-origin:0 0;">Folga</div>
<div class="t" style="left:502px;top:537.4px;font-size:11px;line-height:11px;color:#555;transform:scaleX(0.9805);transform-origin:0 0;">Lateral</div>
<div class="t" style="left:621px;top:531px;font-size:22px;line-height:22px;color:#d9262b;">I</div>
<div class="t" style="left:638px;top:544px;font-size:11px;line-height:11px;color:#555;transform:scaleX(0.9947);transform-origin:0 0;">Folga Inferior</div>
<div class="t" style="left:757.3px;top:409px;font-size:24px;line-height:24px;color:#d9262b;">K</div>
<div class="t" style="left:782px;top:410px;font-size:11px;line-height:11px;color:#555;transform:scaleX(0.9889);transform-origin:0 0;">Folga do Rasgo na</div>
<div class="t" style="left:782px;top:422.5px;font-size:11px;line-height:11px;color:#555;transform:scaleX(0.9621);transform-origin:0 0;">Largura</div>
<div class="t" style="left:713.8px;top:517px;font-size:24px;line-height:24px;color:#d9262b;">J</div>
<div class="t" style="left:733.3px;top:518px;font-size:11px;line-height:11px;color:#555;transform:scaleX(0.9997);transform-origin:0 0;">Folga do Rasgo na</div>
<div class="t" style="left:733.3px;top:530px;font-size:11px;line-height:11px;color:#555;transform:scaleX(0.9771);transform-origin:0 0;">Profundidade</div>
<div class="t" style="left:859.3px;top:520px;font-size:24px;line-height:24px;color:#d9262b;">L</div>
<div class="t" style="left:821.4px;top:546px;font-size:11px;line-height:11px;color:#555;transform:scaleX(1.0052);transform-origin:0 0;">Recuo Traseiro</div>
<div class="t" style="left:821.4px;top:558.4px;font-size:11px;line-height:11px;color:#555;transform:scaleX(0.9899);transform-origin:0 0;">da Base</div>
<div class="t" style="left:956.3px;top:541.6px;font-size:22px;line-height:22px;color:#d9262b;">M</div>
<div class="t" style="left:984.4px;top:539px;font-size:11px;line-height:11px;color:#555;transform:scaleX(0.9959);transform-origin:0 0;">Recuo Traseiro</div>
<div class="t" style="left:984.4px;top:550.6px;font-size:11px;line-height:11px;color:#555;transform:scaleX(1.0762);transform-origin:0 0;">na Lateral</div>
<div class="t" style="left:1018.9px;top:474.4px;font-size:22px;line-height:22px;color:#d9262b;">N</div>
<div class="t" style="left:1288.8px;top:474.5px;font-size:22px;line-height:22px;color:#d9262b;">O</div>
<svg width="1371" height="1215"><g stroke="#ff0000" fill="none" stroke-linecap="round" stroke-linejoin="round"><line x1="398" y1="828" x2="474" y2="828.5" stroke-width="8"/><path d="M444 812 Q456 822 478 828.5 Q460 834 445 845.5" stroke-width="8"/></g></svg>
<svg width="1371" height="1215"><rect x="32.5" y="70.5" width="12" height="18" rx="2" fill="#c9a26b" stroke="#8d6a3a" stroke-width="1"/><rect x="34" y="72" width="9" height="15" rx="1" fill="#d9b985"/><rect x="35" y="76" width="2" height="4" fill="#9fb6cc"/><path d="M50 71.5 v17 M47 71.5 h6 M47 88.5 h6 M48 74 l2 -2 l2 2 M48 86 l2 2 l2 -2" stroke="#e0202a" stroke-width="1.4" fill="none"/><polygon points="576.5,115.5 583.5,115.5 580,120" fill="#111"/><rect x="594.5" y="113.5" width="16" height="11" rx="1.5" fill="#e8eef6" stroke="#8a96a6" stroke-width="1"/><rect x="597" y="115" width="11" height="8" fill="#3a78e0"/><path d="M610 110 h3 M611.5 110 v14 M610 124 h3" stroke="#222" stroke-width="1.2"/><rect x="624.5" y="106.5" width="8" height="9" fill="#e8e8e8" stroke="#6a5a5a" stroke-width="1"/><rect x="636.5" y="117.5" width="8" height="10" fill="#e8f4f4" stroke="#e01818" stroke-width="1.4"/><path d="M635 109 l5 4 M641 110 v4 h-4" stroke="#1a2a9a" stroke-width="1.4" fill="none"/><path d="M657 111 L673 124 M673 110 L658 124" stroke="#ee1c1c" stroke-width="2.6" stroke-linecap="round"/><line x1="685.5" y1="108" x2="685.5" y2="127" stroke="#c8c8c8" stroke-width="1"/><rect x="694" y="108" width="18" height="18" rx="2" fill="#b4b4b4"/><rect x="697" y="110" width="12" height="6" fill="#d8d8d8"/><rect x="698" y="119" width="10" height="7" fill="#9c9c9c"/><rect x="723.5" y="111.5" width="16" height="16" rx="1" fill="#fafafa" stroke="#777" stroke-width="1"/><rect x="731" y="106" width="13" height="13" rx="1" fill="#7a7050" stroke="#555" stroke-width="1"/><rect x="733" y="107" width="9" height="4" fill="#ddd"/><rect x="734" y="114" width="6" height="4" fill="#333"/><text x="724" y="126" font-family="Liberation Sans" font-size="9" font-weight="bold" fill="#1020e0">&lt;a=</text><circle cx="760" cy="114" r="6.5" fill="#a6a6a6" stroke="#8a8a8a" stroke-width="2.5" stroke-dasharray="2 1.4"/><circle cx="760" cy="114" r="2.2" fill="#f0f0f0"/><path d="M758 120 l5 5 l10 -9" stroke="#1a9a2a" stroke-width="4" fill="none"/><path d="M758 120 l5 5 l10 -9" stroke="#6ddc4a" stroke-width="2" fill="none"/><path d="M786 125 l11 -10" stroke="#b8b8b8" stroke-width="3"/><polygon points="800,111 791,113 798,120" fill="#b8b8b8"/><rect x="798" y="107.5" width="6" height="7" fill="#eee" stroke="#c4c4c4" stroke-width="1"/><path d="M828 114 l-11 10" stroke="#2a78d0" stroke-width="3"/><polygon points="815,127 817,118 824,125" fill="#2a78d0"/><rect x="827.5" y="107.5" width="7" height="8" fill="#e8f0fa" stroke="#5a90d8" stroke-width="1"/><g stroke="#222" stroke-width="1" stroke-dasharray="1 1" fill="none"><line x1="45.5" y1="149" x2="45.5" y2="166"/><line x1="52.5" y1="155" x2="52.5" y2="164"/><line x1="46" y1="152.5" x2="49" y2="152.5"/><line x1="53" y1="158.5" x2="56" y2="158.5"/><line x1="79.5" y1="143" x2="79.5" y2="163"/><line x1="80" y1="146.5" x2="83" y2="146.5"/><line x1="80" y1="153.5" x2="83" y2="153.5"/><line x1="80" y1="160.5" x2="83" y2="160.5"/></g><g fill="#e6e6e6" stroke="#7c8ea6" stroke-width="1"><rect x="43.5" y="143.5" width="5" height="5"/><rect x="49.5" y="150.5" width="5" height="5"/><rect x="56.5" y="156.5" width="5" height="5"/><rect x="83.5" y="144.5" width="5" height="5"/><rect x="83.5" y="151.5" width="5" height="5"/><rect x="83.5" y="158.5" width="5" height="5"/></g><g stroke="#333" stroke-width="1"><line x1="44.5" y1="146" x2="47.5" y2="146"/><line x1="50.5" y1="153" x2="53.5" y2="153"/><line x1="57.5" y1="159" x2="60.5" y2="159"/><line x1="84.5" y1="147" x2="87.5" y2="147"/><line x1="86" y1="145.5" x2="86" y2="148.5"/><line x1="84.5" y1="154" x2="87.5" y2="154"/><line x1="86" y1="152.5" x2="86" y2="155.5"/><line x1="84.5" y1="161" x2="87.5" y2="161"/><line x1="86" y1="159.5" x2="86" y2="162.5"/></g><g stroke="#6aa0d8" stroke-width="1.2" fill="none"><path d="M43.5 148 v-4.5 h4.5"/><path d="M49.5 155 v-4.5 h4.5"/><path d="M56.5 161 v-4.5 h4.5"/><path d="M83.5 149 v-4.5 h4.5"/><path d="M83.5 156 v-4.5 h4.5"/><path d="M83.5 163 v-4.5 h4.5"/></g><g fill="#2a4c9c"><path d="M423 144.5 h4.5 l1.2 5.5 v11.5 h-9 v-9 l0.5-3z"/><path d="M431 144.5 h4.5 l3 5 l0.5 3 v9 h-9 v-11.5z"/><rect x="427" y="151" width="4.5" height="5"/></g><g fill="#fff" opacity="0.9"><rect x="421" y="155.5" width="3" height="5"/><rect x="432.5" y="155.5" width="3" height="5"/><rect x="421.5" y="151.5" width="4" height="1.6"/><rect x="432.5" y="151.5" width="4" height="1.6"/><rect x="424" y="147" width="2.5" height="1.2"/><rect x="432" y="147" width="2.5" height="1.2"/></g><line x1="445.5" y1="142" x2="445.5" y2="166" stroke="#d0d0d0" stroke-width="1"/></svg>
</body></html>
